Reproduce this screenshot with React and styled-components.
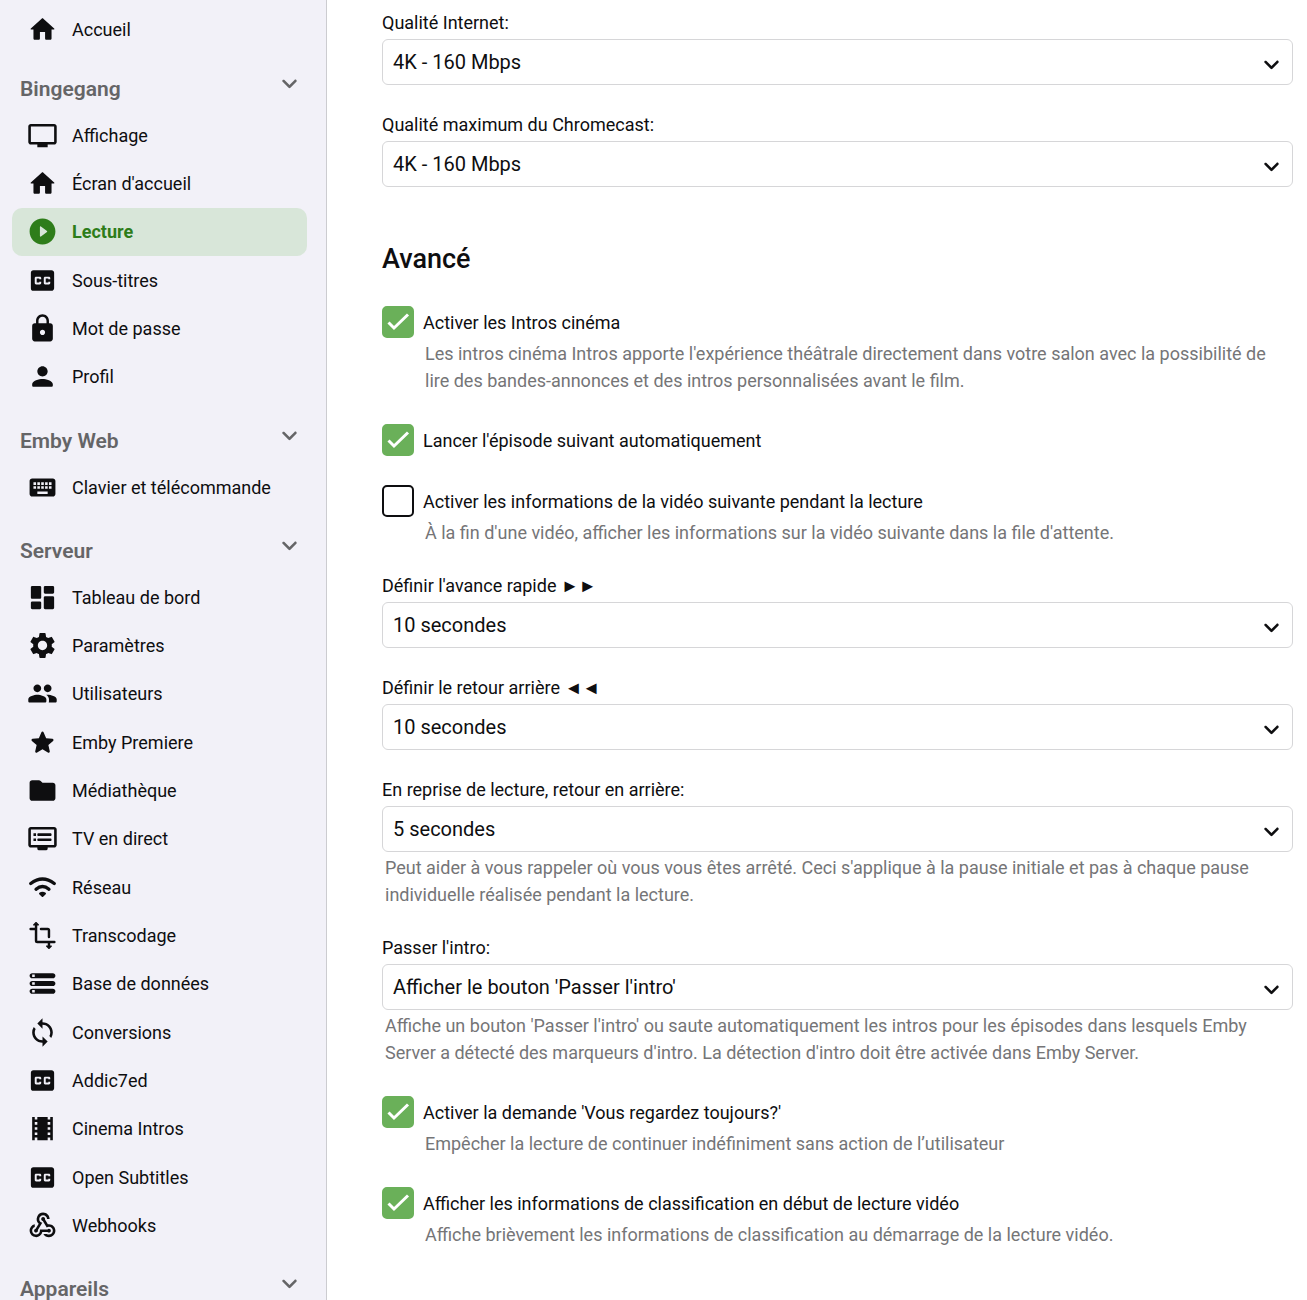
import { useState } from 'react'
import styled, { createGlobalStyle } from 'styled-components'
import {
  MdClosedCaption,
  MdKeyboard,
  MdLocalMovies,
  MdLock,
  MdSettings,
  MdSync,
  MdTv,
  MdWebhook,
} from 'react-icons/md'

const GlobalStyle = createGlobalStyle`
  body{
    margin:0;
    background-color:#fff;
    color:#0e0e10;
    font-family:Roboto, "Liberation Sans", sans-serif;
    font-size:18px;
    overflow-x:hidden;
  }
  *{
    box-sizing:border-box;
  }
`
const Page = styled.div`
  display:grid;
  grid-template-columns:327px minmax(0, 1fr);
  height:100vh;
  overflow:hidden;
`
const Sidebar = styled.nav`
  background-color:#f2f1f8;
  border-right:1px solid #ccccd0;
  padding:6px 19px 0 12px;
  overflow:hidden;
`
const GroupHeader = styled.div`
  display:flex;
  justify-content:space-between;
  align-items:flex-start;
  padding:${(props)=>props.$first ? '21px' : '25px'} 2px 9px 8px;
  color:#656567;
`
const GroupTitle = styled.h2`
  margin:0;
  font-size:21px;
  line-height:28px;
  font-weight:600;
`
const Toggle = styled.button`
  display:flex;
  height:28px;
  padding:0;
  border:0;
  background:none;
  color:inherit;
  cursor:pointer;
  svg{
    margin-top:-7px;
  }
`
const NavList = styled.ul`
  list-style:none;
  margin:0;
  padding:0;
  li:nth-child(3n){
    margin-bottom:1px;
  }
`
const NavLink = styled.a`
  display:flex;
  align-items:center;
  gap:14px;
  height:48px;
  padding:0 0 2px 15px;
  border-radius:10px;
  text-decoration:none;
  color:${(props)=>props.$active ? '#2e7d1a' : '#0e0e10'};
  background-color:${(props)=>props.$active ? '#d8e6d9' : 'transparent'};
  font-weight:${(props)=>props.$active ? 700 : 400};
`
const Glyph = styled.svg`
  width:31px;
  height:31px;
  fill:currentColor;
  flex:none;
`
const NavIcon = styled.span`
  display:flex;
  font-size:31px;
`
const Content = styled.main`
  padding:9px 14px 0 55px;
  overflow:hidden;
`
const Field = styled.div`
  display:flex;
  flex-direction:column;
  margin-bottom:26px;
`
const FieldLabel = styled.label`
  line-height:28px;
  margin-bottom:2px;
`
const SelectBox = styled.div`
  position:relative;
  display:flex;
  svg{
    position:absolute;
    right:6px;
    top:10px;
    pointer-events:none;
  }
`
const Select = styled.select`
  appearance:none;
  width:100%;
  height:46px;
  padding:0 40px 0 10px;
  border:1px solid #d6d6d8;
  border-radius:6px;
  background-color:#fff;
  color:inherit;
  font-family:inherit;
  font-size:20px;
`
const Help = styled.div`
  padding:${(props)=>props.$indent ? '2px 20px 1px 43px' : '2px 20px 0 3px'};
  line-height:27px;
  color:#757577;
`
const SectionTitle = styled.h1`
  margin:54px 0 25px;
  font-size:27px;
  line-height:36px;
  font-weight:500;
`
const CheckField = styled.div`
  padding-top:4px;
  margin-bottom:25px;
`
const CheckLabel = styled.label`
  display:flex;
  align-items:center;
  gap:9px;
  height:32px;
  cursor:pointer;
`
const CheckBox = styled.span`
  position:relative;
  display:flex;
  width:32px;
  height:32px;
  svg{
    position:absolute;
    inset:0;
    width:32px;
    height:32px;
    pointer-events:none;
  }
`
const CheckInput = styled.input`
  appearance:none;
  width:32px;
  height:32px;
  margin:0;
  border:2px solid #0e0e10;
  border-radius:5px;
  background-color:#fff;
  &:checked{
    border-color:#6ab059;
    background-color:#6ab059;
  }
`

const glyphs = {
  home: 'M10 19v-5h4v5c0 .55.45 1 1 1h3c.55 0 1-.45 1-1v-7h1.7c.46 0 .68-.57.33-.87L12.67 3.6c-.38-.34-.96-.34-1.34 0l-8.36 7.53c-.34.3-.13.87.33.87H5v7c0 .55.45 1 1 1h3c.55 0 1-.45 1-1z',
  play: 'M12 2C6.48 2 2 6.48 2 12s4.48 10 10 10 10-4.48 10-10S17.52 2 12 2zm-2 13.5v-7c0-.41.47-.65.8-.4l4.67 3.5c.27.2.27.6 0 .8l-4.67 3.5c-.33.25-.8.01-.8-.4z',
  person: 'M12 12c2.21 0 4-1.79 4-4s-1.79-4-4-4-4 1.79-4 4 1.79 4 4 4zm0 2c-2.67 0-8 1.34-8 4v1c0 .55.45 1 1 1h14c.55 0 1-.45 1-1v-1c0-2.66-5.33-4-8-4z',
  dashboard: 'M4 13h6c.55 0 1-.45 1-1V4c0-.55-.45-1-1-1H4c-.55 0-1 .45-1 1v8c0 .55.45 1 1 1zm0 8h6c.55 0 1-.45 1-1v-4c0-.55-.45-1-1-1H4c-.55 0-1 .45-1 1v4c0 .55.45 1 1 1zm10 0h6c.55 0 1-.45 1-1v-8c0-.55-.45-1-1-1h-6c-.55 0-1 .45-1 1v8c0 .55.45 1 1 1zM13 4v4c0 .55.45 1 1 1h6c.55 0 1-.45 1-1V4c0-.55-.45-1-1-1h-6c-.55 0-1 .45-1 1z',
  people: 'M16 11c1.66 0 2.99-1.34 2.99-3S17.66 5 16 5s-3 1.34-3 3 1.34 3 3 3zm-8 0c1.66 0 2.99-1.34 2.99-3S9.66 5 8 5 5 6.34 5 8s1.34 3 3 3zm0 2c-2.33 0-7 1.17-7 3.5V18c0 .55.45 1 1 1h12c.55 0 1-.45 1-1v-1.5c0-2.33-4.67-3.5-7-3.5zm8 0c-.29 0-.62.02-.97.05.02.01.03.03.04.04 1.14.83 1.93 1.94 1.93 3.41V18c0 .35-.07.69-.18 1H22c.55 0 1-.45 1-1v-1.5c0-2.33-4.67-3.5-7-3.5z',
  star: 'M12 17.27l4.15 2.51c.76.46 1.69-.22 1.49-1.08l-1.1-4.72 3.67-3.18c.67-.58.31-1.68-.57-1.75l-4.83-.41-1.89-4.46c-.34-.81-1.5-.81-1.84 0L9.19 8.63l-4.83.41c-.88.07-1.24 1.17-.57 1.75l3.67 3.18-1.1 4.72c-.2.86.73 1.54 1.49 1.08l4.15-2.5z',
  folder: 'M10.59 4.59C10.21 4.21 9.7 4 9.17 4H4c-1.1 0-1.99.9-1.99 2L2 18c0 1.1.9 2 2 2h16c1.1 0 2-.9 2-2V8c0-1.1-.9-2-2-2h-8l-1.41-1.41z',
  dvr: 'M21 3H3c-1.1 0-2 .9-2 2v12c0 1.1.9 2 2 2h5v1c0 .55.45 1 1 1h6c.55 0 1-.45 1-1v-1h5c1.1 0 2-.9 2-2V5c0-1.1-.9-2-2-2zm0 14H3V5h18v12zM8.8 8h9.4c.45 0 .8.35.8.8v.4c0 .45-.35.8-.8.8H8.8c-.45 0-.8-.35-.8-.8v-.4c0-.45.35-.8.8-.8zM8.8 12h9.4c.45 0 .8.35.8.8v.4c0 .45-.35.8-.8.8H8.8c-.45 0-.8-.35-.8-.8v-.4c0-.45.35-.8.8-.8zM5 8h2v2H5zM5 12h2v2H5z',
  storage: 'M4 20h16c1.1 0 2-.9 2-2s-.9-2-2-2H4c-1.1 0-2 .9-2 2s.9 2 2 2zm0-3h2v2H4zM4 14h16c1.1 0 2-.9 2-2s-.9-2-2-2H4c-1.1 0-2 .9-2 2s.9 2 2 2zm0-3h2v2H4zM4 8h16c1.1 0 2-.9 2-2s-.9-2-2-2H4c-1.1 0-2 .9-2 2s.9 2 2 2zm0-3h2v2H4z',
  arrow: 'M8.12 9.29L12 13.17l3.88-3.88c.39-.39 1.02-.39 1.41 0 .39.39.39 1.02 0 1.41l-4.59 4.59c-.39.39-1.02.39-1.41 0L6.7 10.7c-.39-.39-.39-1.02 0-1.41.39-.38 1.03-.39 1.42 0z',
}

function Icon({name}) {
  return (
    <Glyph viewBox="0 0 24 24" aria-hidden="true">
      <path fillRule="evenodd" d={glyphs[name]} />
    </Glyph>
  )
}

function WifiIcon() {
  return (
    <Glyph viewBox="0 0 24 24" aria-hidden="true" stroke="currentColor" strokeLinecap="round" strokeLinejoin="round">
      <path d="M2.9 8.9Q12 1.9 21.1 8.9M7 13.3Q12 9 17 13.3" fill="none" strokeWidth="2.6" />
      <path d="M10 16.7Q12 15.2 14 16.7L12 18.7z" strokeWidth="1.4" />
    </Glyph>
  )
}

function TransformIcon() {
  return (
    <Glyph viewBox="0 0 24 24" aria-hidden="true" stroke="currentColor" strokeLinecap="round" strokeLinejoin="round">
      <path d="M7 4v12q0 1 1 1h13.2M2.8 7H7M10.8 7H16q1 0 1 1v5.2M17 17v3.5" fill="none" strokeWidth="1.9" />
      <path d="M5.1 3.8L7 1.9l1.9 1.9zM15.1 20.2L17 22.1l1.9-1.9z" strokeWidth=".8" />
    </Glyph>
  )
}

const groups = [
  {
    title: 'Bingegang',
    items: [
      ['Affichage', <MdTv />],
      ["Écran d'accueil", <Icon name="home" />],
      ['Lecture', <Icon name="play" />],
      ['Sous-titres', <MdClosedCaption />],
      ['Mot de passe', <MdLock />],
      ['Profil', <Icon name="person" />],
    ],
  },
  {
    title: 'Emby Web',
    items: [['Clavier et télécommande', <MdKeyboard />]],
  },
  {
    title: 'Serveur',
    items: [
      ['Tableau de bord', <Icon name="dashboard" />],
      ['Paramètres', <MdSettings />],
      ['Utilisateurs', <Icon name="people" />],
      ['Emby Premiere', <Icon name="star" />],
      ['Médiathèque', <Icon name="folder" />],
      ['TV en direct', <Icon name="dvr" />],
      ['Réseau', <WifiIcon />],
      ['Transcodage', <TransformIcon />],
      ['Base de données', <Icon name="storage" />],
      ['Conversions', <MdSync />],
      ['Addic7ed', <MdClosedCaption />],
      ['Cinema Intros', <MdLocalMovies />],
      ['Open Subtitles', <MdClosedCaption />],
      ['Webhooks', <MdWebhook />],
    ],
  },
  { title: 'Appareils', items: [] },
]

function NavItem({label,icon,active}) {
  return (
    <li>
      <NavLink href="#" $active={active} aria-current={active ? 'page' : undefined}>
        <NavIcon>{icon}</NavIcon>
        {label}
      </NavLink>
    </li>
  )
}

function NavGroup({title,items,first}) {
  const [isOpen,setIsOpen] = useState(true)

  return (
    <section>
      <GroupHeader $first={first}>
        <GroupTitle>{title}</GroupTitle>
        <Toggle aria-label={title} aria-expanded={isOpen} onClick={()=>{setIsOpen(!isOpen)}}>
          <Icon name="arrow" />
        </Toggle>
      </GroupHeader>
      {
        isOpen &&
        <NavList>
          {items.map(([label,icon])=>(
            <NavItem key={label} label={label} icon={icon} active={label === 'Lecture'} />
          ))}
        </NavList>
      }
    </section>
  )
}

function SelectField({id,label,value,help}) {
  return (
    <Field>
      <FieldLabel htmlFor={id}>{label}</FieldLabel>
      <SelectBox>
        <Select id={id} defaultValue={value}>
          <option>{value}</option>
        </Select>
        <Icon name="arrow" />
      </SelectBox>
      {help && <Help>{help}</Help>}
    </Field>
  )
}

function CheckOption({label,help,checked}) {
  const [isChecked,setIsChecked] = useState(!!checked)

  return (
    <CheckField>
      <CheckLabel>
        <CheckBox>
          <CheckInput type="checkbox" checked={isChecked} onChange={()=>{setIsChecked(!isChecked)}} />
          {
            isChecked &&
            <svg viewBox="0 0 32 32" fill="none" stroke="#fff" strokeWidth="3">
              <path d="M6.5 16.5l5.5 5.5L26 8.5" />
            </svg>
          }
        </CheckBox>
        {label}
      </CheckLabel>
      {help && <Help $indent>{help}</Help>}
    </CheckField>
  )
}

function App() {
  return (
    <Page>
      <GlobalStyle />
      <Sidebar>
        <NavList>
          <NavItem label="Accueil" icon={<Icon name="home" />} />
        </NavList>
        {groups.map((group,index)=>(
          <NavGroup key={group.title} title={group.title} items={group.items} first={index === 0} />
        ))}
      </Sidebar>

      <Content>
        <SelectField id="internet" label="Qualité Internet:" value="4K - 160 Mbps" />
        <SelectField id="chromecast" label="Qualité maximum du Chromecast:" value="4K - 160 Mbps" />

        <SectionTitle>Avancé</SectionTitle>
        <CheckOption
          checked
          label="Activer les Intros cinéma"
          help="Les intros cinéma Intros apporte l'expérience théâtrale directement dans votre salon avec la possibilité de lire des bandes-annonces et des intros personnalisées avant le film."
        />
        <CheckOption checked label="Lancer l'épisode suivant automatiquement" />
        <CheckOption
          label="Activer les informations de la vidéo suivante pendant la lecture"
          help="À la fin d'une vidéo, afficher les informations sur la vidéo suivante dans la file d'attente."
        />

        <SelectField id="forward" label="Définir l'avance rapide ►►" value="10 secondes" />
        <SelectField id="back" label="Définir le retour arrière ◄◄" value="10 secondes" />
        <SelectField
          id="resume"
          label="En reprise de lecture, retour en arrière:"
          value="5 secondes"
          help="Peut aider à vous rappeler où vous vous êtes arrêté. Ceci s'applique à la pause initiale et pas à chaque pause individuelle réalisée pendant la lecture."
        />
        <SelectField
          id="intro"
          label="Passer l'intro:"
          value="Afficher le bouton 'Passer l'intro'"
          help="Affiche un bouton 'Passer l'intro' ou saute automatiquement les intros pour les épisodes dans lesquels Emby Server a détecté des marqueurs d'intro. La détection d'intro doit être activée dans Emby Server."
        />
        <CheckOption
          checked
          label="Activer la demande 'Vous regardez toujours?'"
          help="Empêcher la lecture de continuer indéfiniment sans action de l’utilisateur"
        />
        <CheckOption
          checked
          label="Afficher les informations de classification en début de lecture vidéo"
          help="Affiche brièvement les informations de classification au démarrage de la lecture vidéo."
        />
      </Content>
    </Page>
  )
}

export default App
